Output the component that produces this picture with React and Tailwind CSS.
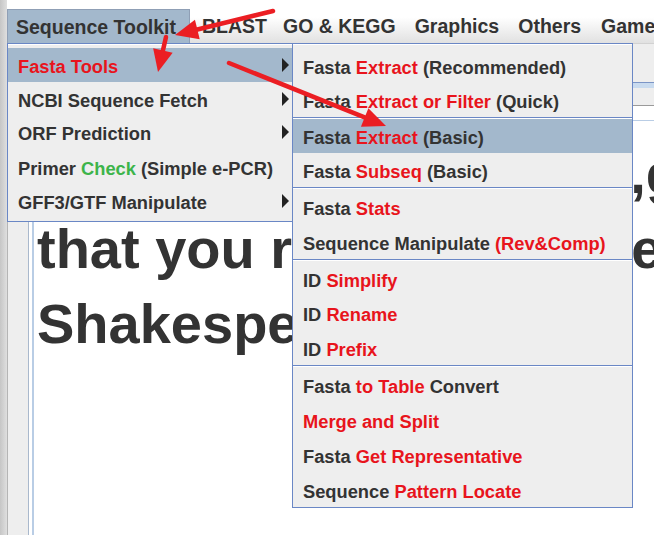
import React from "react";

const R = ({ children }) => <span className="text-[#e8141c]">{children}</span>;
const G = ({ children }) => <span className="text-[#3cb44a]">{children}</span>;

function MenuBar() {
  return (
    <div className="flex h-[43px] shrink-0 items-end overflow-hidden whitespace-nowrap bg-linear-to-b from-white from-40% to-[#e1e1e1] text-[19.5px] font-bold text-[#333]">
      <div className="flex h-[34px] w-[183px] shrink-0 items-center border border-b-0 border-[#8f9fb5] bg-[#a3b8cc] pl-[8px] pt-[2px]">
        Sequence Toolkit
      </div>
      <div className="ml-[12px] flex h-[34px] shrink-0 items-center pt-[2px]">BLAST</div>
      <div className="ml-[16px] flex h-[34px] shrink-0 items-center pt-[2px]">GO &amp; KEGG</div>
      <div className="ml-[19px] flex h-[34px] shrink-0 items-center pt-[2px]">Graphics</div>
      <div className="ml-[19px] flex h-[34px] shrink-0 items-center pt-[2px]">Others</div>
      <div className="ml-[20px] flex h-[34px] shrink-0 items-center pt-[2px]">Games</div>
    </div>
  );
}

function Caret() {
  return (
    <svg className="absolute right-[3px] top-1/2 -translate-y-1/2" width="7" height="14" viewBox="0 0 7 14">
      <polygon points="0,0 7,7 0,14" fill="#222" />
    </svg>
  );
}

function Item({ className, hl, caret, children }) {
  return (
    <div className={`relative flex items-center whitespace-nowrap ${hl ? "bg-[#a3b8cc]" : ""} ${className}`}>
      {children}
      {caret && <Caret />}
    </div>
  );
}

function Sep() {
  return <div className="h-[2px] border-t border-[#6a87c5] bg-white" />;
}

function LeftMenu() {
  return (
    <div className="absolute left-[7px] top-[43px] w-[286px] border border-[#6a87c5] bg-[#eeeeee] text-[18.3px] font-bold text-[#333]">
      <div className="h-px bg-white" />
      <div className="h-[3px]" />
      <Item hl caret className="h-[34px] pl-[10px] pt-[4px]">
        <R>Fasta Tools</R>
      </Item>
      <Item caret className="h-[34px] pl-[10px] pt-[4px]">NCBI Sequence Fetch</Item>
      <Item caret className="h-[32px] pl-[10px] pt-[4px]">ORF Prediction</Item>
      <Item className="h-[38px] pl-[10px] pt-[4px]">
        Primer&nbsp;<G>Check</G>&nbsp;(Simple e-PCR)
      </Item>
      <Item caret className="h-[30px] pl-[10px] pt-[4px]">GFF3/GTF Manipulate</Item>
      <div className="h-[5px]" />
    </div>
  );
}

function SubMenu() {
  const a = "h-[34px] pl-[10px] pt-[4px]";
  const b = "h-[35px] pl-[10px] pt-[4px]";
  return (
    <div className="absolute left-[292px] top-[43px] w-[341px] border border-[#6a87c5] bg-[#eeeeee] text-[18.3px] font-bold text-[#333]">
      <div className="h-px bg-white" />
      <div className="h-[4px]" />
      <Item className={a}>
        Fasta&nbsp;<R>Extract</R>&nbsp;(Recommended)
      </Item>
      <Item className={a}>
        Fasta&nbsp;<R>Extract or Filter</R>&nbsp;(Quick)
      </Item>
      <Sep />
      <Item hl className={a}>
        Fasta&nbsp;<R>Extract</R>&nbsp;(Basic)
      </Item>
      <Item className={a}>
        Fasta&nbsp;<R>Subseq</R>&nbsp;(Basic)
      </Item>
      <Sep />
      <Item className={b}>
        Fasta&nbsp;<R>Stats</R>
      </Item>
      <Item className={b}>
        Sequence Manipulate&nbsp;<R>(Rev&amp;Comp)</R>
      </Item>
      <Sep />
      <Item className={b}>
        ID&nbsp;<R>Simplify</R>
      </Item>
      <Item className={a}>
        ID&nbsp;<R>Rename</R>
      </Item>
      <Item className={b}>
        ID&nbsp;<R>Prefix</R>
      </Item>
      <Sep />
      <Item className={b}>
        Fasta&nbsp;<R>to Table</R>&nbsp;Convert
      </Item>
      <Item className={b}>
        <R>Merge and Split</R>
      </Item>
      <Item className={b}>
        Fasta&nbsp;<R>Get Representative</R>
      </Item>
      <Item className={b}>
        Sequence&nbsp;<R>Pattern Locate</R>
      </Item>
    </div>
  );
}

function Arrow({ x1, y1, x2, y2, len = 23, half = 10 }) {
  const dx = x2 - x1;
  const dy = y2 - y1;
  const d = Math.hypot(dx, dy);
  const ux = dx / d;
  const uy = dy / d;
  const bx = x2 - ux * len;
  const by = y2 - uy * len;
  const pts = `${x2},${y2} ${bx - uy * half},${by + ux * half} ${bx + uy * half},${by - ux * half}`;
  return (
    <g>
      <line x1={x1} y1={y1} x2={bx + ux * 2} y2={by + uy * 2} stroke="#eb1e23" strokeWidth="4.5" strokeLinecap="round" />
      <polygon points={pts} fill="#eb1e23" />
    </g>
  );
}

export default function App() {
  return (
    <div className="relative h-[535px] w-[654px] overflow-hidden bg-white font-['Liberation_Sans',Arial,sans-serif] text-[#333]">
      <div className="flex h-full">
        <div className="w-[7px] shrink-0 bg-linear-to-r from-[#c6c6c6] to-[#dfdfdf]" />
        <div className="flex min-w-0 flex-1 flex-col">
          <MenuBar />
          <div className="h-px bg-[#d2d2d2]" />
          <div className="h-[38px] bg-[#eeeeee]" />
          <div className="h-px bg-[#7b95c6]" />
          <div className="h-[5px] bg-[#c9dbef]" />
          <div className="h-[17px] bg-[#eeeeee]" />
          <div className="h-px bg-[#9a9a9a]" />
          <div className="flex min-h-0 flex-1">
            <div className="w-[22px] shrink-0 border-x border-l-[#b5b5b5] border-r-[#a9b8cc] bg-[#eeeeee]" />
            <div className="flex min-w-0 flex-1 flex-col pl-[3px] pt-[14px]">
              <div className="flex-1 overflow-hidden border-l-2 border-t border-[#b9cde5] pl-[3px] pt-[15px] text-[56px] font-bold leading-[75px] text-[#333]">
                <div className="whitespace-nowrap tracking-[-0.2px]">People always told me,go read</div>
                <div className="whitespace-nowrap">that you really need the</div>
                <div className="whitespace-nowrap">Shakespeare</div>
              </div>
            </div>
          </div>
        </div>
      </div>

      <LeftMenu />
      <SubMenu />

      <svg className="pointer-events-none absolute left-0 top-0" width="654" height="535">
        <Arrow x1={273} y1={11} x2={175} y2={35} />
        <Arrow x1={166} y1={37} x2={158} y2={72} len={22} />
        <Arrow x1={229} y1={63} x2={386} y2={126} />
      </svg>
    </div>
  );
}
